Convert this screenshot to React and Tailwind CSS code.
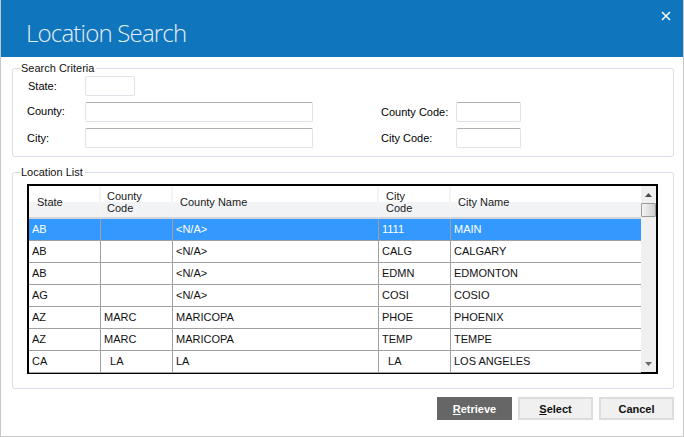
import React from "react";

const rows = [
  ["AB", "", "<N/A>", "1111", "MAIN"],
  ["AB", "", "<N/A>", "CALG", "CALGARY"],
  ["AB", "", "<N/A>", "EDMN", "EDMONTON"],
  ["AG", "", "<N/A>", "COSI", "COSIO"],
  ["AZ", "MARC", "MARICOPA", "PHOE", "PHOENIX"],
  ["AZ", "MARC", "MARICOPA", "TEMP", "TEMPE"],
  ["CA", "  LA", "LA", "  LA", "LOS ANGELES"],
];

const colWidths = ["w-[72px]", "w-[72px]", "w-[206px]", "w-[72px]", "w-[190px]"];

// Header cells of the grid
const HeaderCell = ({ width, children, className = "" }) => {
  return (
    <div className={`${width} flex h-full items-center border-r-2 border-[#f4f4f6] leading-[12px] text-[#1a1a1a] last:border-r-0 ${className}`}>
      <span>{children}</span>
    </div>
  );
};

const LocationGrid = () => {
  return (
    <div className="flex h-[190px] w-[631px] border-2 border-black bg-white">
      <div className="w-[612px] shrink-0">
        <div className="flex h-[33px] border-b-2 border-[#d5d5d8] bg-gradient-to-b from-white from-50% to-[#f2f3f5] to-50%">
          <HeaderCell width="w-[72px]" className="pl-2">State</HeaderCell>
          <HeaderCell width="w-[72px]" className="pl-[6px]">County<br />Code</HeaderCell>
          <HeaderCell width="w-[206px]" className="pl-[7px]">County Name</HeaderCell>
          <HeaderCell width="w-[72px]" className="pl-[7px]">City<br />Code</HeaderCell>
          <HeaderCell width="w-[190px]" className="pl-[7px]">City Name</HeaderCell>
        </div>
        {rows.map((row, i) => (
          <div
            key={i}
            className={`flex h-[22px] items-center border-b border-[#a0a0a0] ${i === 0 ? "bg-[#3399ff] text-white" : "text-[#111111]"}`}
          >
            {row.map((cell, j) => (
              <div
                key={j}
                className={`${colWidths[j]} flex h-full items-center whitespace-pre border-r border-[#a0a0a0] pl-[3px] last:border-r-0`}
              >
                {cell}
              </div>
            ))}
          </div>
        ))}
      </div>
      {/* Scrollbar */}
      <div className="flex flex-1 flex-col items-center bg-[#f0f0f0]">
        <div className="flex h-[17px] items-center justify-center">
          <svg width="7" height="4" viewBox="0 0 7 4"><path d="M3.5 0 L7 4 H0 Z" fill="#4a4a4a" /></svg>
        </div>
        <div className="h-[14px] w-[15px] rounded-[1px] border border-[#9a9a9a] bg-gradient-to-r from-[#f4f4f4] to-[#cfcfcf]" />
        <div className="flex-1" />
        <div className="flex h-[17px] items-center justify-center">
          <svg width="7" height="4" viewBox="0 0 7 4"><path d="M0 0 H7 L3.5 4 Z" fill="#6a6a6a" /></svg>
        </div>
      </div>
    </div>
  );
};

const Field = ({ label, labelClass, inputClass, topDark = true }) => {
  return (
    <div className="flex items-center">
      <span className={labelClass}>{label}</span>
      <div className={`h-5 rounded-[2px] border border-[#dfe2e8] bg-white ${topDark ? "border-t-[#aeaeb4]" : ""} ${inputClass}`} />
    </div>
  );
};

const ActionButton = ({ children, dark }) => {
  return (
    <button
      className={`h-[23px] w-[75px] border-2 text-center leading-[18px] font-bold ${
        dark ? "border-[#666666] bg-[#666666] text-white" : "border-[#dcdcdc] bg-[#f0f0f0] text-[#111111]"
      }`}
    >
      {children}
    </button>
  );
};

export default function App() {
  return (
    <div className="h-[437px] w-[684px] overflow-hidden border-x border-b border-[#c8c8c8] bg-white font-['Liberation_Sans',sans-serif] text-[11px]">
      {/* Title bar */}
      <div className="-mx-px flex h-[57px] justify-between bg-[#0f75bd] pl-[26px] pr-[13px]">
        <h1 className="mt-[14px] font-['Open_Sans',sans-serif] text-[24px] font-light leading-[37px] tracking-[-0.8px] text-[#e4eff7]">
          Location Search
        </h1>
        <svg className="mt-[11px]" width="10" height="10" viewBox="0 0 10 10">
          <path d="M1 1 L9 9 M9 1 L1 9" stroke="#f4f9fc" strokeWidth="1.6" />
        </svg>
      </div>

      <div className="flex flex-col pl-[11px] pr-[9px] pt-[5px]">
        {/* Search criteria */}
        <fieldset className="h-[95px] w-[662px] rounded-[3px] border border-[#d9dfe6]">
          <legend className="ml-2 pr-[2px] leading-[13px] text-[#111111]">Search Criteria</legend>
          <div className="flex flex-col gap-[5px] pl-[14px] pt-[1px]">
            <Field label="State:" labelClass="w-[58px] pl-[1px]" inputClass="w-[50px]" topDark={false} />
            <div className="flex">
              <Field label="County:" labelClass="w-[58px]" inputClass="w-[228px]" />
              <div className="ml-[68px] mt-[1px]">
                <Field label="County Code:" labelClass="w-[75px]" inputClass="w-[65px]" />
              </div>
            </div>
            <div className="mt-[1px] flex">
              <Field label="City:" labelClass="w-[58px]" inputClass="w-[228px]" />
              <div className="ml-[68px]">
                <Field label="City Code:" labelClass="w-[75px]" inputClass="w-[65px]" />
              </div>
            </div>
          </div>
        </fieldset>

        {/* Location list */}
        <fieldset className="mt-[9px] h-[223px] w-[662px] rounded-[3px] border border-[#d9dfe6]">
          <legend className="ml-2 pr-[2px] leading-[13px] text-[#111111]">Location List</legend>
          <div className="pl-[14px] pt-[5px]">
            <LocationGrid />
          </div>
        </fieldset>

        {/* Buttons */}
        <div className="mt-[8px] flex w-[662px] justify-end gap-[6px]">
          <ActionButton dark><span className="underline">R</span>etrieve</ActionButton>
          <ActionButton><span className="underline">S</span>elect</ActionButton>
          <ActionButton>Cancel</ActionButton>
        </div>
      </div>
    </div>
  );
}
